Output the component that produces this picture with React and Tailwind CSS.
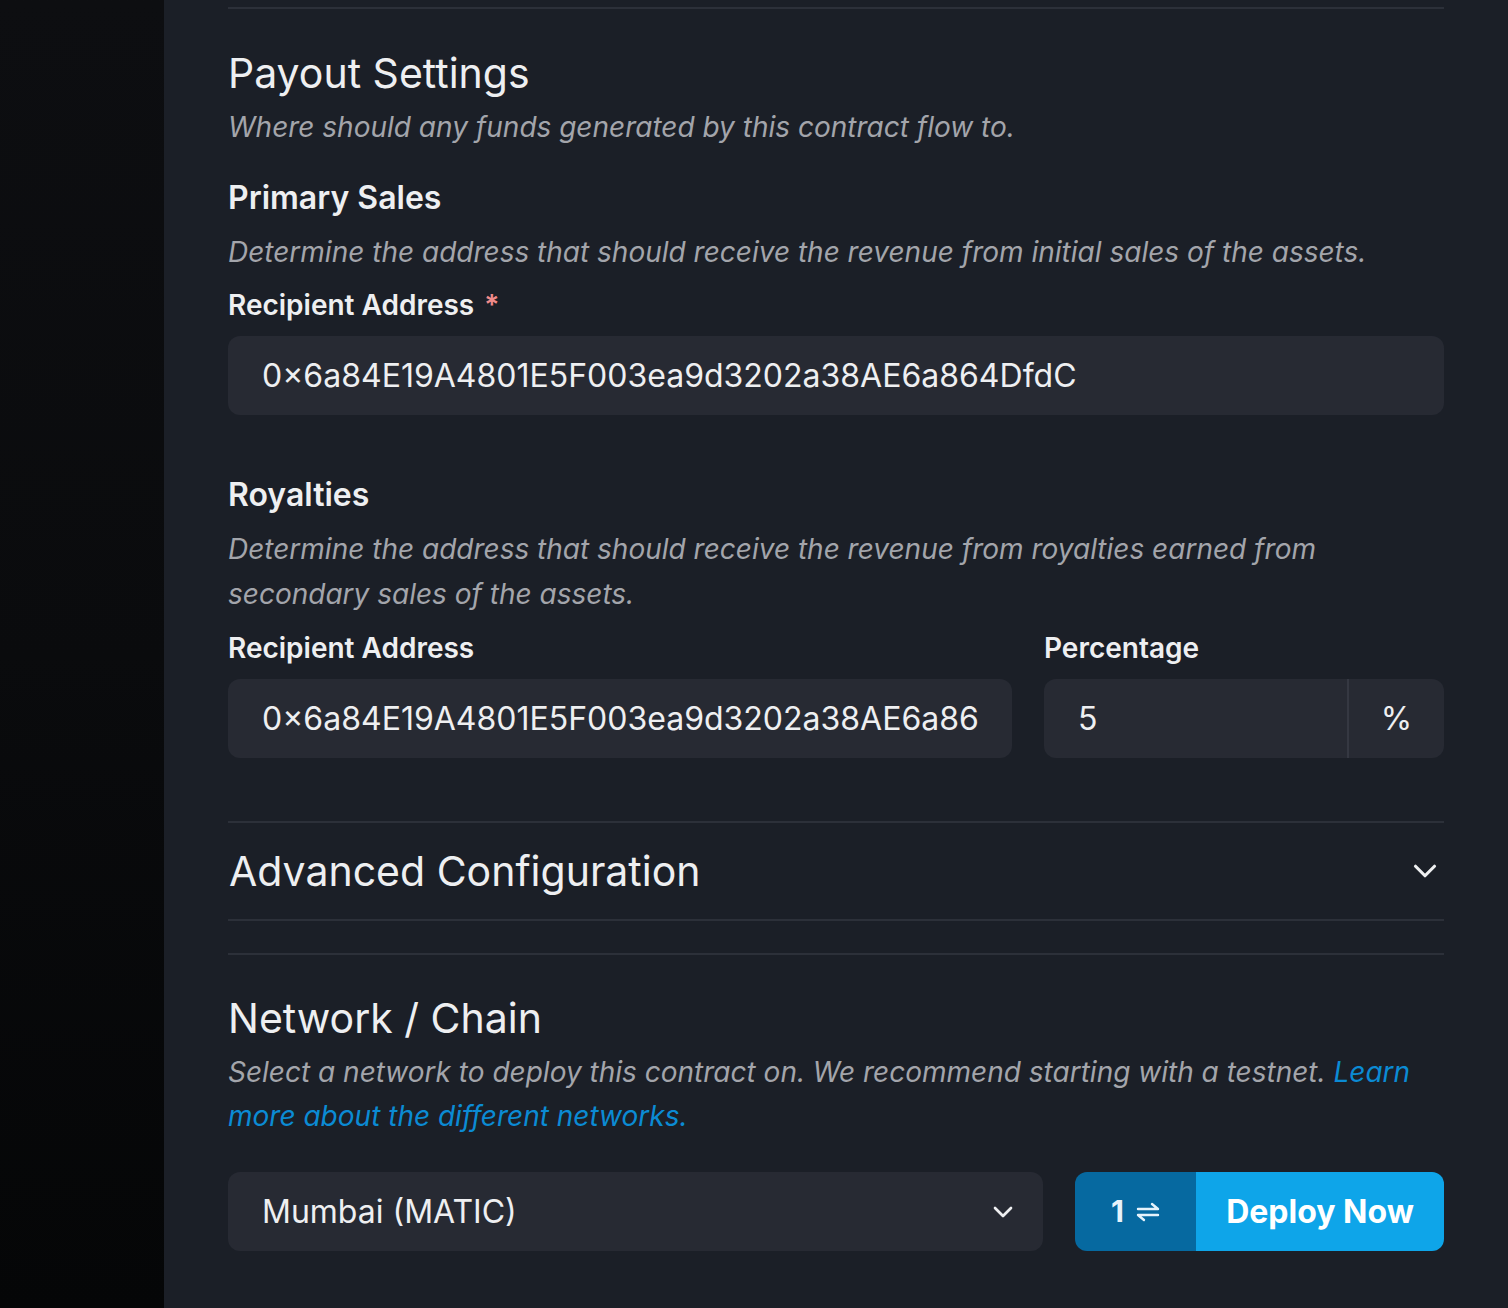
import React from "react";
import { ChevronDown } from "lucide-react";

const inter = { fontFamily: "Inter, 'Noto Sans', sans-serif" };

const Desc = ({ children, className = "" }) => (
  <p className={`text-[28px] italic text-[#a3a5ab] ${className}`}>{children}</p>
);

const Label = ({ children, required }) => (
  <div className="text-[28px] leading-[34px] font-semibold text-[#eeeff1]">
    {children}
    {required && <span className="ml-[10px] text-[#f08b8b]">*</span>}
  </div>
);

const Field = ({ value, className = "" }) => (
  <div className={`h-[79px] rounded-[12px] bg-[#272a33] pl-[34px] pr-[33px] flex items-center ${className}`}>
    <div className="min-w-0 flex-1 overflow-hidden">
      <span className="text-[32px] text-[#eeeff1] whitespace-nowrap">{value}</span>
    </div>
  </div>
);

const Harpoons = () => (
  <svg width="24" height="20" viewBox="0 0 24 20" fill="none" stroke="currentColor" strokeWidth="2.4" strokeLinecap="round" strokeLinejoin="round">
    <path d="M2 7h20l-6-5" />
    <path d="M22 13H2l6 5" />
  </svg>
);

export default function App() {
  return (
    <div className="flex min-h-[1308px] w-full overflow-hidden" style={inter}>
      <div className="w-[164px] shrink-0 bg-gradient-to-b from-[#0d0e11] via-[#0a0b0d] to-[#050607]" />
      <div className="flex-1 min-w-0 bg-[#1b1f27] pl-[64px] pr-[64px] pt-[7px] pb-[56px]">
        <div className="border-t-2 border-[#2c3039]">
          {/* Payout settings */}
          <h2 className="mt-[42px] text-[41px] leading-[44px] text-[#eeeff1]">Payout Settings</h2>
          <Desc className="mt-[12px] leading-[40px]">
            Where should any funds generated by this contract flow to.
          </Desc>

          <h3 className="mt-[33px] text-[32px] leading-[36px] font-semibold text-[#eeeff1]">Primary Sales</h3>
          <Desc className="mt-[16px] leading-[40px]">
            Determine the address that should receive the revenue from initial sales of the assets.
          </Desc>
          <div className="mt-[16px]">
            <Label required>Recipient Address</Label>
          </div>
          <Field className="mt-[14px]" value="0×6a84E19A4801E5F003ea9d3202a38AE6a864DfdC" />

          <h3 className="mt-[62px] text-[32px] leading-[36px] font-semibold text-[#eeeff1]">Royalties</h3>
          <Desc className="mt-[14px] leading-[45px] pr-[120px]">
            Determine the address that should receive the revenue from royalties earned from secondary sales of the
            assets.
          </Desc>
          <div className="mt-[14px] flex gap-[32px]">
            <div className="flex-1 min-w-0">
              <Label>Recipient Address</Label>
              <Field className="mt-[14px]" value="0×6a84E19A4801E5F003ea9d3202a38AE6a864DfdC" />
            </div>
            <div className="w-[400px] shrink-0">
              <Label>Percentage</Label>
              <div className="mt-[14px] h-[79px] rounded-[12px] bg-[#272a33] flex overflow-hidden">
                <div className="flex-1 pl-[34px] flex items-center text-[32px] text-[#eeeff1]">5</div>
                <div className="w-[97px] border-l-2 border-[#353842] flex items-center justify-center text-[32px] text-[#eeeff1]">
                  %
                </div>
              </div>
            </div>
          </div>

          {/* Advanced */}
          <div className="mt-[63px] border-t-2 border-b-2 border-[#2c3039] h-[100px] flex items-center justify-between">
            <span className="text-[41px] leading-[48px] text-[#eeeff1] pl-px">Advanced Configuration</span>
            <ChevronDown className="text-[#eeeff1]" size={38} strokeWidth={2} />
          </div>

          {/* Network */}
          <div className="mt-[32px] border-t-2 border-[#2c3039]">
            <h2 className="mt-[41px] text-[41px] leading-[44px] text-[#eeeff1]">Network / Chain</h2>
            <Desc className="mt-[10px] leading-[44px] pr-[20px]">
              Select a network to deploy this contract on. We recommend starting with a testnet.{" "}
              <a className="text-[#0b8bd4]">Learn more about the different networks.</a>
            </Desc>
            <div className="mt-[34px] flex gap-[32px]">
              <div className="flex-1 h-[79px] rounded-[12px] bg-[#272a33] pl-[34px] pr-[24px] flex items-center justify-between">
                <span className="text-[32px] text-[#eeeff1]">Mumbai (MATIC)</span>
                <ChevronDown className="text-[#eeeff1]" size={32} strokeWidth={2} />
              </div>
              <div className="w-[369px] h-[79px] rounded-[12px] overflow-hidden flex">
                <div className="w-[121px] bg-[#0669a0] flex items-center justify-center gap-[12px] text-[#e6f3fb]">
                  <span className="text-[30px] font-bold">1</span>
                  <Harpoons />
                </div>
                <div className="flex-1 bg-[#0ea5e9] flex items-center justify-center text-[32px] font-bold text-white">
                  Deploy Now
                </div>
              </div>
            </div>
          </div>
        </div>
      </div>
    </div>
  );
}
